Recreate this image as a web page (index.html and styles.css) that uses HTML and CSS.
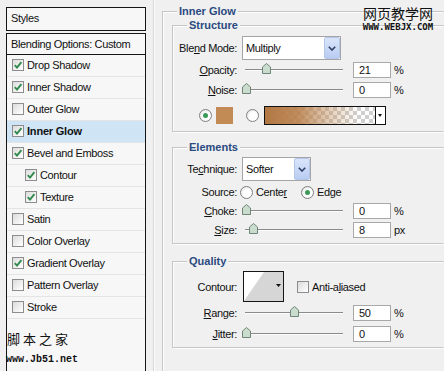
FILE: index.html
```html
<!DOCTYPE html>
<html>
<head>
<meta charset="utf-8">
<link rel="stylesheet" href="styles.css">
</head>
<body>
<div class="app">
  <aside class="styles-col">
    <div class="styles-head">Styles</div>
    <ul class="styles-list">
      <li class="blend-row">Blending Options: Custom</li>
      <li class="fx"><span class="cb on"><svg viewBox="0 0 10 10"><path d="M1.8 5.2 L4 7.6 L8.4 2.2"/></svg></span>Drop Shadow</li>
      <li class="fx"><span class="cb on"><svg viewBox="0 0 10 10"><path d="M1.8 5.2 L4 7.6 L8.4 2.2"/></svg></span>Inner Shadow</li>
      <li class="fx"><span class="cb"></span>Outer Glow</li>
      <li class="fx active"><span class="cb on"><svg viewBox="0 0 10 10"><path d="M1.8 5.2 L4 7.6 L8.4 2.2"/></svg></span>Inner Glow</li>
      <li class="fx"><span class="cb on"><svg viewBox="0 0 10 10"><path d="M1.8 5.2 L4 7.6 L8.4 2.2"/></svg></span>Bevel and Emboss</li>
      <li class="fx sub"><span class="cb on"><svg viewBox="0 0 10 10"><path d="M1.8 5.2 L4 7.6 L8.4 2.2"/></svg></span>Contour</li>
      <li class="fx sub"><span class="cb on"><svg viewBox="0 0 10 10"><path d="M1.8 5.2 L4 7.6 L8.4 2.2"/></svg></span>Texture</li>
      <li class="fx"><span class="cb"></span>Satin</li>
      <li class="fx"><span class="cb"></span>Color Overlay</li>
      <li class="fx"><span class="cb on"><svg viewBox="0 0 10 10"><path d="M1.8 5.2 L4 7.6 L8.4 2.2"/></svg></span>Gradient Overlay</li>
      <li class="fx"><span class="cb"></span>Pattern Overlay</li>
      <li class="fx"><span class="cb"></span>Stroke</li>
    </ul>
  </aside>
  <div class="divider"></div>
  <main class="panel">
    <fieldset class="group outer">
      <legend>Inner Glow</legend>
      <fieldset class="group inner structure">
        <legend>Structure</legend>
        <div class="row h24 mt4">
          <span class="lbl">Ble<u>n</u>d Mode:</span>
          <div class="select w-blend"><span>Multiply</span><i class="sel-btn"><svg viewBox="0 0 8 5"><path d="M0.8 0.8 L4 4 L7.2 0.8"/></svg></i></div>
        </div>
        <div class="row h16 mt2">
          <span class="lbl"><u>O</u>pacity:</span>
          <div class="slider"><svg class="thumb" style="--p:21" viewBox="0 0 9 11"><path d="M4.5 0.5 L8.5 4 V10.5 H0.5 V4 Z"/></svg></div>
          <span class="num">21</span><span class="unit">%</span>
        </div>
        <div class="row h16 mt4">
          <span class="lbl"><u>N</u>oise:</span>
          <div class="slider"><svg class="thumb" style="--p:0" viewBox="0 0 9 11"><path d="M4.5 0.5 L8.5 4 V10.5 H0.5 V4 Z"/></svg></div>
          <span class="num">0</span><span class="unit">%</span>
        </div>
        <div class="row h19 mt8 color-row">
          <span class="radio on"></span>
          <span class="swatch"></span>
          <span class="radio r2"></span>
          <span class="gradient"><span class="grad-fill"></span><span class="grad-btn"></span></span>
        </div>
      </fieldset>
      <fieldset class="group inner elements">
        <legend>Elements</legend>
        <div class="row h24 mt3">
          <span class="lbl">Te<u>c</u>hnique:</span>
          <div class="select w-tech"><span>Softer</span><i class="sel-btn"><svg viewBox="0 0 8 5"><path d="M0.8 0.8 L4 4 L7.2 0.8"/></svg></i></div>
        </div>
        <div class="row h16 mt3">
          <span class="lbl">Source:</span>
          <span class="radio src1"></span><span class="rtext">Cente<u>r</u></span>
          <span class="radio on src2"></span><span class="rtext">Ed<u>g</u>e</span>
        </div>
        <div class="row h16 mt3">
          <span class="lbl"><u>C</u>hoke:</span>
          <div class="slider"><svg class="thumb" style="--p:0" viewBox="0 0 9 11"><path d="M4.5 0.5 L8.5 4 V10.5 H0.5 V4 Z"/></svg></div>
          <span class="num">0</span><span class="unit">%</span>
        </div>
        <div class="row h16 mt3">
          <span class="lbl"><u>S</u>ize:</span>
          <div class="slider"><svg class="thumb" style="--p:8" viewBox="0 0 9 11"><path d="M4.5 0.5 L8.5 4 V10.5 H0.5 V4 Z"/></svg></div>
          <span class="num">8</span><span class="unit">px</span>
        </div>
      </fieldset>
      <fieldset class="group inner quality">
        <legend>Quality</legend>
        <div class="row h31 mt3">
          <span class="lbl">Contour:</span>
          <span class="contour"><svg viewBox="0 0 39 29" preserveAspectRatio="none"><path class="c-fill" d="M0 29 L20 0 H39 V29 Z"/><path class="c-arrow" d="M32 12 H37 L34.5 15 Z"/></svg></span>
          <span class="cb aa"></span><span class="rtext">Anti-a<u>l</u>iased</span>
        </div>
        <div class="row h16 mt3">
          <span class="lbl"><u>R</u>ange:</span>
          <div class="slider"><svg class="thumb" style="--p:50" viewBox="0 0 9 11"><path d="M4.5 0.5 L8.5 4 V10.5 H0.5 V4 Z"/></svg></div>
          <span class="num">50</span><span class="unit">%</span>
        </div>
        <div class="row h16 mt5">
          <span class="lbl"><u>J</u>itter:</span>
          <div class="slider"><svg class="thumb" style="--p:0" viewBox="0 0 9 11"><path d="M4.5 0.5 L8.5 4 V10.5 H0.5 V4 Z"/></svg></div>
          <span class="num">0</span><span class="unit">%</span>
        </div>
      </fieldset>
    </fieldset>
  </main>
</div>
<div class="wm-top"><div class="wm-cn">网页教学网</div><div class="wm-url">WWW.WEBJX.COM</div></div>
<div class="wm-bottom"><div class="wm-cn2">脚本之家</div><div class="wm-url2">www.Jb51.net</div></div>
</body>
</html>
```
FILE: styles.css
```css
* { box-sizing: border-box; }
html, body { margin: 0; padding: 0; }
body {
  width: 444px;
  height: 371px;
  overflow: hidden;
  position: relative;
  background: #f0f0f0;
  font-family: "Liberation Sans", Arial, sans-serif;
  font-size: 11px;
  letter-spacing: -0.35px;
  color: #111;
}
u { text-decoration: underline; text-underline-offset: 1px; }
.app { display: flex; align-items: flex-start; height: 371px; overflow: hidden; }

/* left styles list */
.styles-col {
  flex: none;
  width: 140px;
  margin: 7px 0 0 6px;
  display: flex;
  flex-direction: column;
  gap: 2px;
}
.styles-head {
  height: 24px;
  border: 1px solid #151515;
  background: #f7f7f7;
  padding-left: 4px;
  line-height: 21px;
}
.styles-list {
  list-style: none;
  margin: 0;
  padding: 0;
  height: 338px;
  border: 1px solid #151515;
  border-bottom: 0;
  background: #f7f7f7;
}
.blend-row {
  height: 21px;
  line-height: 20px;
  padding-left: 4px;
  border-bottom: 1px solid #151515;
}
.fx {
  height: 22px;
  display: flex;
  align-items: center;
  gap: 3px;
  padding: 0 0 1px 5px;
  border-bottom: 1px solid #e4e4e4;
}
.fx.sub { padding-left: 18px; }
.fx.active { background: #cfe5f6; font-weight: bold; letter-spacing: -0.2px; }
.cb {
  flex: none;
  width: 12px;
  height: 12px;
  border: 1px solid #8d8d8d;
  background: linear-gradient(135deg, #dcdcdc, #ffffff);
  display: grid;
  place-items: center;
}
.cb svg { width: 10px; height: 10px; fill: none; stroke: #2f8a4c; stroke-width: 1.9; }

.divider {
  flex: none;
  width: 1px;
  height: 371px;
  margin-left: 7px;
  background: #d9d9d9;
  box-shadow: 1px 0 0 #fbfbfb;
}

/* right panel */
.panel { flex: none; margin: 4px 0 0 8px; }
.group {
  margin: 0;
  padding: 0;
  min-width: 0;
  border: 1px solid #c6c6c6;
  box-shadow: inset 1px 1px 0 #fdfdfd, 1px 1px 0 #fdfdfd;
}
.group legend {
  margin-left: 14px;
  padding: 0 2px;
  line-height: 14px;
  font-weight: bold;
  color: #2a4a80;
  letter-spacing: 0;
  background: #f0f0f0;
}
.outer { width: 282px; height: 368px; border-right-color: transparent; border-bottom-color: transparent; }
.inner { margin-left: 9px; width: 272px; border-right-color: transparent; }
.structure { padding-bottom: 6px; }
.elements { margin-top: 8px; padding-bottom: 5px; }
.quality { margin-top: 10px; padding-bottom: 5px; }

.row { display: flex; align-items: center; }
.h16 { height: 16px; }
.h19 { height: 19px; }
.h24 { height: 24px; }
.h31 { height: 31px; }
.mt2 { margin-top: 2px; }
.mt3 { margin-top: 3px; }
.mt4 { margin-top: 4px; }
.mt5 { margin-top: 5px; }
.mt8 { margin-top: 8px; }
.lbl {
  flex: none;
  width: 64px;
  margin-right: 5px;
  text-align: right;
  white-space: nowrap;
}

.select {
  flex: none;
  height: 24px;
  border: 1px solid #a5a5a8;
  background: #fff;
  display: flex;
  align-items: center;
  justify-content: space-between;
  padding-left: 3px;
}
.w-blend { width: 99px; }
.w-tech { width: 69px; }
.sel-btn {
  width: 16px;
  height: 22px;
  border: 1px solid #b4c6ea;
  border-radius: 2px;
  background: linear-gradient(#dae5fa, #b8ccf2);
  display: grid;
  place-items: center;
}
.sel-btn svg { width: 8px; height: 5px; fill: none; stroke: #2b3e64; stroke-width: 1.6; }

.slider { flex: none; position: relative; width: 104px; height: 16px; }
.slider::before {
  content: "";
  position: absolute;
  left: 3px;
  right: 3px;
  top: 7px;
  height: 1px;
  background: #8a8a8a;
  box-shadow: 0 1px 0 #fdfdfd;
}
.thumb {
  position: absolute;
  top: 1px;
  left: calc(4px + var(--p) * 0.96px - 4.5px);
  width: 9px;
  height: 11px;
  fill: #c9dccd;
  stroke: #6f8676;
  stroke-width: 1;
}
.num {
  flex: none;
  width: 38px;
  height: 16px;
  margin-left: 7px;
  padding-left: 5px;
  line-height: 14px;
  border: 1px solid #a8a8a8;
  background: #fff;
}
.unit { margin-left: 3px; }

.color-row { padding-left: 26px; }
.radio {
  flex: none;
  width: 13px;
  height: 13px;
  border: 1px solid #7f7f7f;
  border-radius: 50%;
  background: radial-gradient(circle at 60% 60%, #ffffff 40%, #dadada);
  display: grid;
  place-items: center;
}
.radio.on::after {
  content: "";
  width: 5px;
  height: 5px;
  border-radius: 50%;
  background: #3a9a58;
}
.swatch { flex: none; width: 17px; height: 17px; margin-left: 4px; background: #c28a54; }
.r2 { margin-left: 13px; }
.gradient {
  flex: none;
  display: flex;
  width: 122px;
  height: 19px;
  margin-left: 5px;
  border: 1px solid #111;
}
.grad-fill {
  flex: 1;
  background:
    linear-gradient(to right, #b27843 0%, rgba(185, 128, 76, 0.9) 30%, rgba(195, 145, 95, 0.45) 58%, rgba(210, 170, 130, 0) 85%),
    repeating-conic-gradient(#cfcfcf 0 25%, #ffffff 0 50%) 0 0 / 8px 8px;
}
.grad-btn {
  position: relative;
  width: 10px;
  border-left: 1px solid #111;
  background: #fff;
}
.grad-btn::after {
  content: "";
  position: absolute;
  left: 2px;
  top: 7px;
  border-left: 2.5px solid transparent;
  border-right: 2.5px solid transparent;
  border-top: 3px solid #111;
}

.src1 { margin-left: -2px; }
.src2 { margin-left: 14px; }
.rtext { margin-left: 3px; }

.contour {
  flex: none;
  width: 41px;
  height: 31px;
  margin-left: 1px;
  border: 1px solid #151515;
  background: #fff;
}
.contour svg { display: block; width: 39px; height: 29px; }
.c-fill { fill: #d6d6d6; }
.c-arrow { fill: #111; }
.cb.aa { margin-left: 13px; }

/* watermarks overlaying the screenshot */
.wm-top {
  position: absolute;
  left: 362px;
  top: 4px;
  width: 72px;
  text-align: center;
  letter-spacing: 0;
  color: #111;
}
.wm-cn { font-family: "Noto Sans CJK SC", sans-serif; font-size: 14px; line-height: 19px; }
.wm-url { font-family: "DejaVu Sans Mono", monospace; font-size: 9px; font-weight: bold; line-height: 9px; }
.wm-bottom {
  position: absolute;
  left: 6px;
  top: 330px;
  letter-spacing: 0;
  color: #111;
}
.wm-cn2 {
  font-family: "Noto Sans CJK SC", sans-serif;
  font-size: 13px;
  line-height: 18px;
  letter-spacing: 3px;
  padding-left: 1px;
}
.wm-url2 { font-family: "Liberation Mono", monospace; font-size: 10px; font-weight: bold; line-height: 14px; margin-top: 5px; }
```
